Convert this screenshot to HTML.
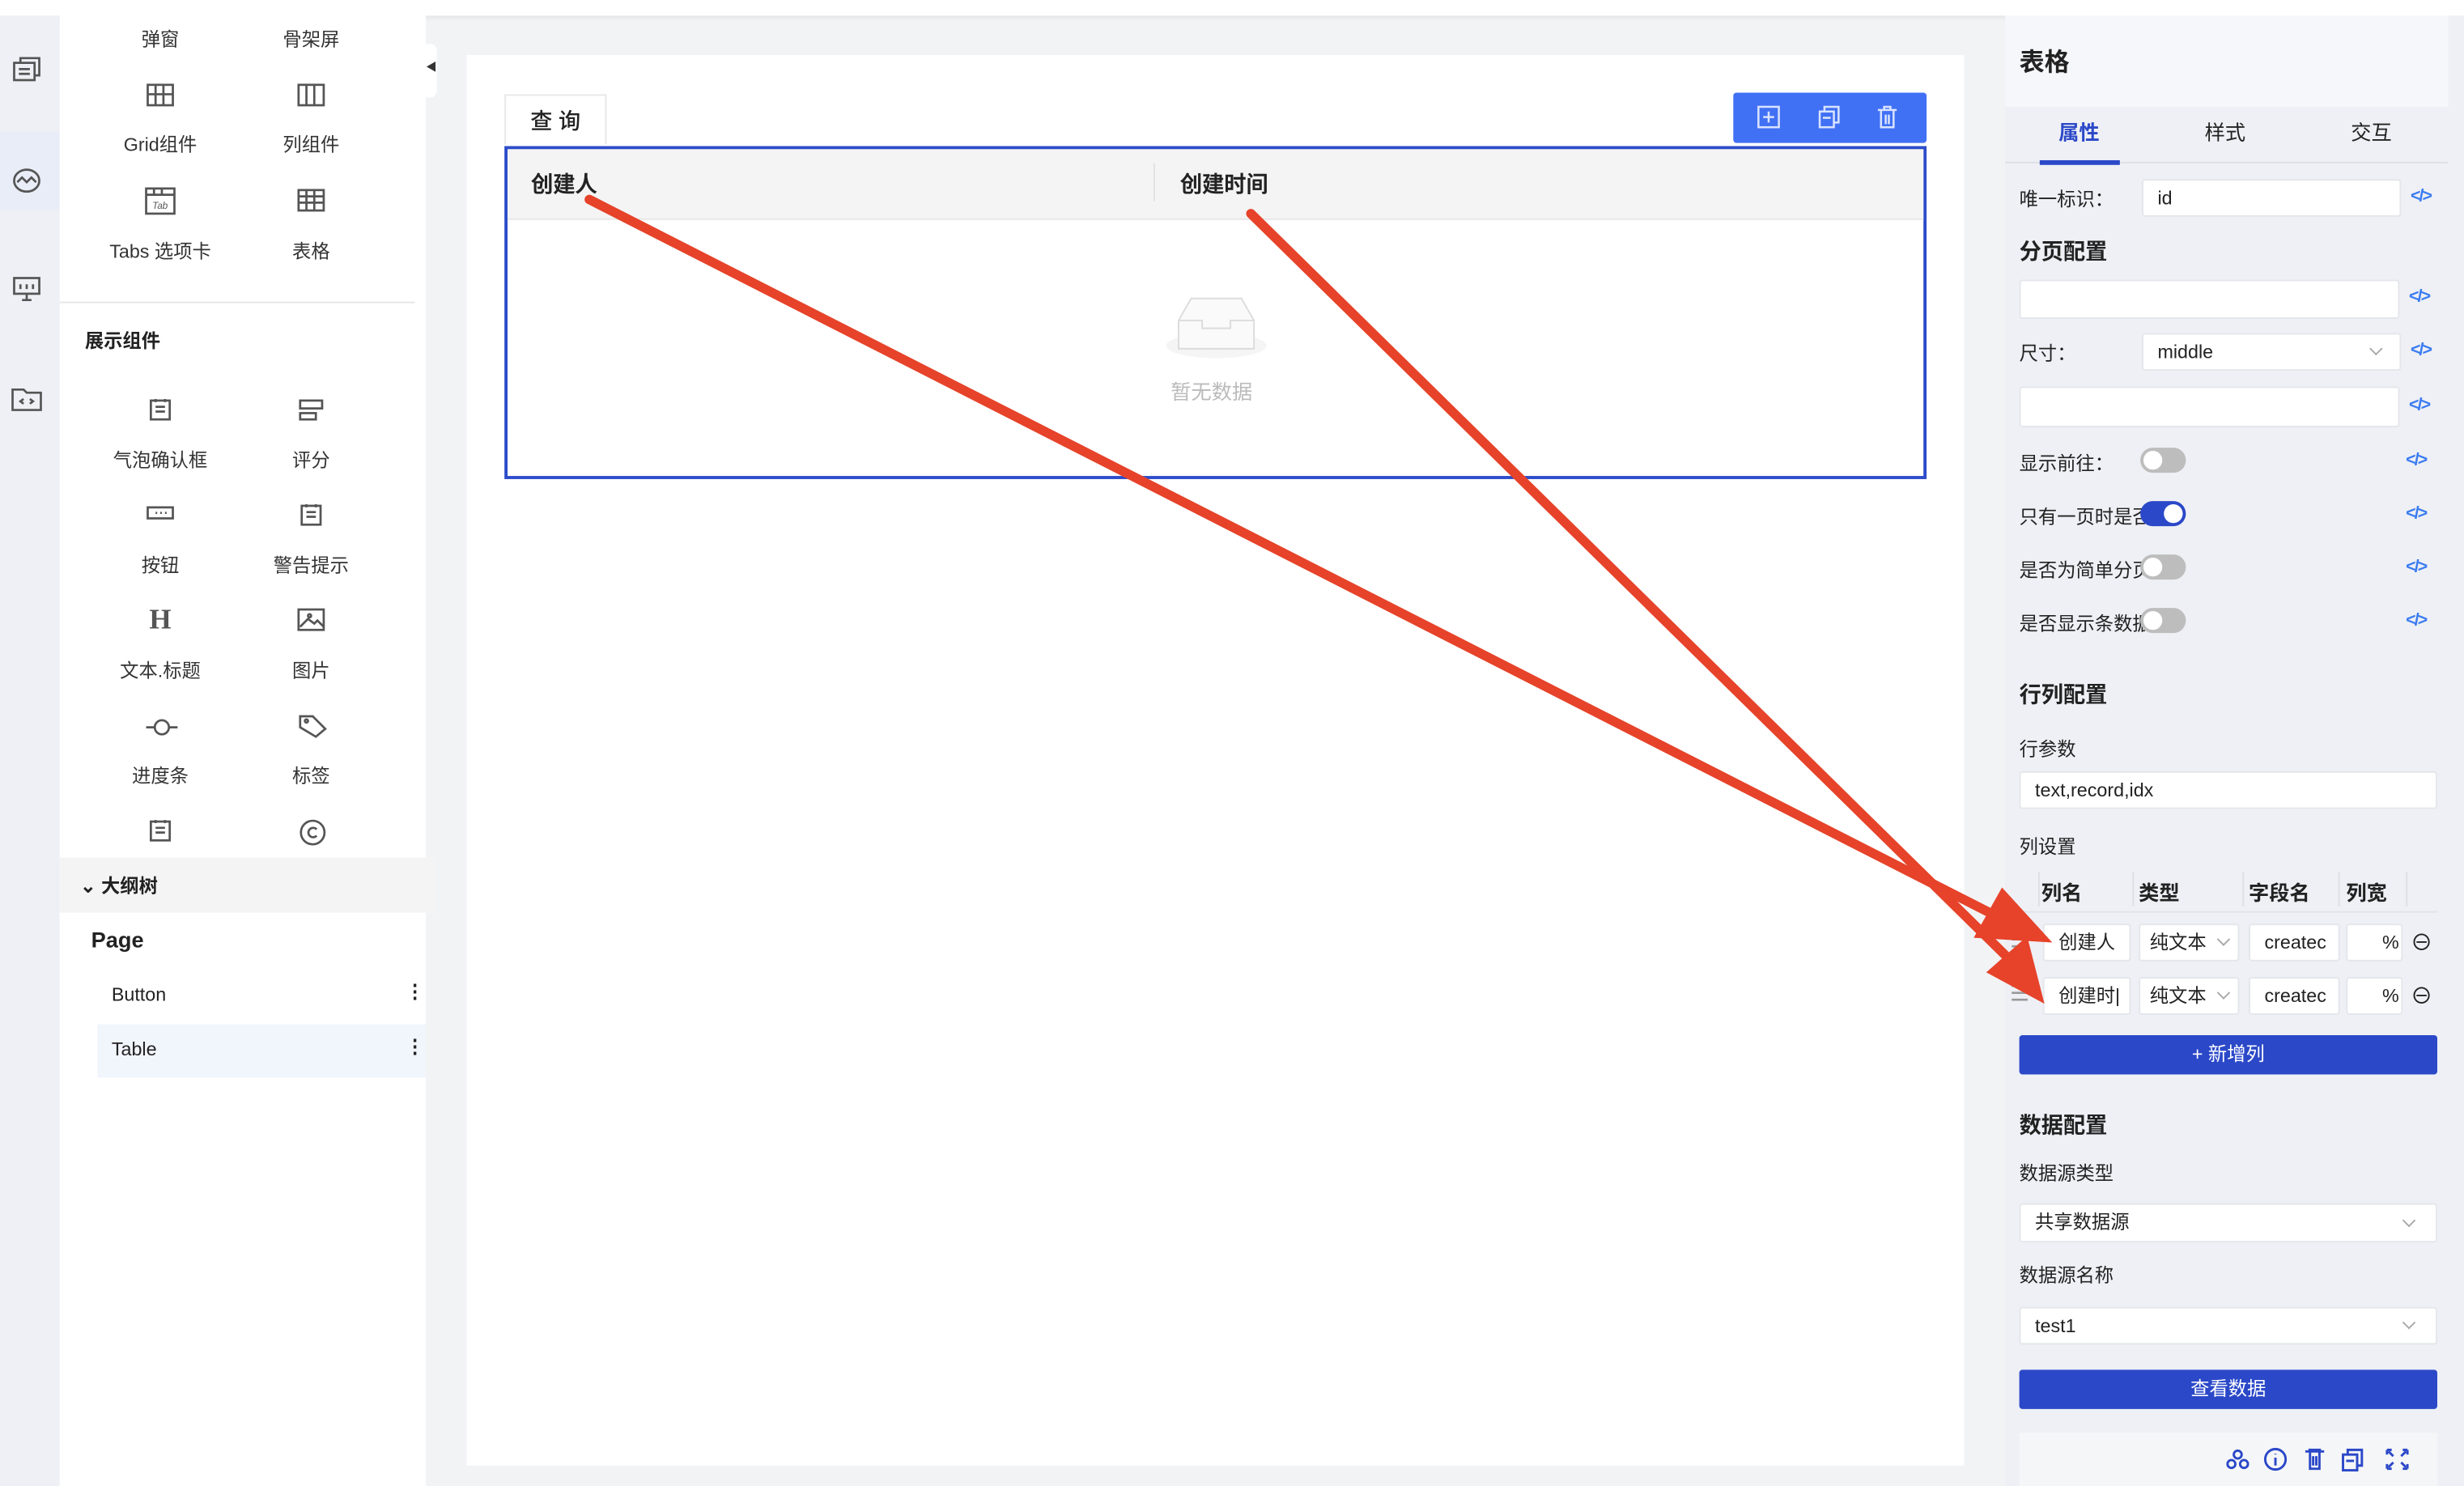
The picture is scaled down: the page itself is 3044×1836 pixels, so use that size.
<!DOCTYPE html>
<html><head><meta charset="utf-8">
<style>
*{box-sizing:border-box;margin:0;padding:0}
html,body{width:3044px;height:1836px;overflow:hidden;background:#f2f3f5}
#w{position:absolute;left:0;top:0;width:1568px;height:946px;transform:scale(1.94133,1.94080);transform-origin:0 0;font-family:"Liberation Sans","Noto Sans CJK SC",sans-serif;color:#222;font-size:12px;background:#f2f3f5}
.a{position:absolute}
.t{position:absolute;white-space:nowrap}
.ic{position:absolute;fill:none;stroke:#555;stroke-width:1.4}
.lab{position:absolute;width:96px;text-align:center;font-size:12px;color:#333}
.inp{position:absolute;background:#fff;border:1px solid #e4e6eb;border-radius:2px;font-size:12px;padding-left:9px;line-height:22px}
.code{position:absolute;color:#3a7bf0;font-size:11px;font-weight:bold;letter-spacing:-1px}
.tg{position:absolute;width:29px;height:16px;border-radius:8px;background:#bdbdbd}
.tg i{position:absolute;top:2px;left:2px;width:12px;height:12px;border-radius:50%;background:#fff}
.tg.on{background:#2b48c8}.tg.on i{left:15px}
.h{font-weight:bold;font-size:14px}
.chev{position:absolute;width:6px;height:6px;border-right:1px solid #aaa;border-bottom:1px solid #aaa;transform:rotate(45deg)}
.btn{position:absolute;background:#2b48c8;color:#fff;text-align:center;border-radius:2px;font-size:12px;line-height:24px}
</style></head><body><div id="w">
<div class="a" style="left:0;top:0;width:1568px;height:10px;background:#fff;box-shadow:0 1px 3px rgba(0,0,0,.08)"></div>
<div class="a" style="left:0;top:10px;width:38px;height:936px;background:#eef0f5"></div>
<div class="a" style="left:0;top:84px;width:38px;height:50px;background:#e9edf7"></div>
<div class="a" style="left:40px;top:102px;width:2px;height:24px;background:#3a62e0"></div>
<svg class="ic" style="left:7px;top:34px" width="20" height="20" viewBox="0 0 20 20"><rect x="2" y="6" width="13" height="11"/><path d="M6 6V3h12v11h-3M5 10h7M5 13h7"/></svg>
<svg class="ic" style="left:6px;top:104px" width="22" height="22" viewBox="0 0 22 22"><ellipse cx="11" cy="11" rx="8" ry="7"/><path d="M5 12l3-3 3 3 3-3 3 3"/></svg>
<svg class="ic" style="left:7px;top:174px" width="20" height="20" viewBox="0 0 20 20"><rect x="2" y="3" width="16" height="10"/><path d="M10 13v4M7 17h6M6 7v3M10 7v3M14 7v3"/></svg>
<svg class="ic" style="left:6px;top:244px" width="22" height="20" viewBox="0 0 22 20"><path d="M2 4h7l2 2h9v11H2z"/><path d="M9 10l-2 1.5 2 1.5M13 10l2 1.5-2 1.5"/></svg>
<div class="a" style="left:38px;top:10px;width:233px;height:536px;background:#fff"></div>
<div class="lab" style="left:54px;top:16px">弹窗</div><div class="lab" style="left:150px;top:16px">骨架屏</div>
<svg class="ic" style="left:92px;top:52px" width="20" height="18" viewBox="0 0 20 18"><rect x="2" y="2" width="16" height="13"/><path d="M7 2v13M12 2v13M2 8h16"/></svg>
<svg class="ic" style="left:188px;top:52px" width="20" height="18" viewBox="0 0 20 18"><rect x="2" y="2" width="16" height="13"/><path d="M7 2v13M12 2v13"/></svg>
<div class="lab" style="left:54px;top:83px">Grid组件</div><div class="lab" style="left:150px;top:83px">列组件</div>
<svg class="ic" style="left:91px;top:118px" width="22" height="20" viewBox="0 0 22 20"><rect x="2" y="2" width="18" height="16"/><path d="M2 6h18M7 2v4M12 2v4"/><text x="6" y="15" font-size="6" fill="#555" stroke="none" font-style="italic">Tab</text></svg>
<svg class="ic" style="left:188px;top:119px" width="20" height="18" viewBox="0 0 20 18"><rect x="2" y="2" width="16" height="13"/><path d="M2 6h16M2 10h16M7 2v13M12 2v13"/></svg>
<div class="lab" style="left:54px;top:151px">Tabs 选项卡</div><div class="lab" style="left:150px;top:151px">表格</div>
<div class="a" style="left:38px;top:192px;width:226px;height:1px;background:#e5e5e5"></div>
<div class="t" style="left:54px;top:208px;font-weight:bold;font-size:12px">展示组件</div>
<svg class="ic" style="left:94px;top:252px" width="16" height="18" viewBox="0 0 16 18"><rect x="2" y="3" width="12" height="12"/><path d="M5 2v2M11 2v2M5 7h6M5 10h6"/></svg>
<svg class="ic" style="left:189px;top:252px" width="18" height="18" viewBox="0 0 18 18"><rect x="2" y="3" width="14" height="5"/><rect x="2" y="11" width="10" height="4"/></svg>
<div class="lab" style="left:54px;top:284px">气泡确认框</div><div class="lab" style="left:150px;top:284px">评分</div>
<svg class="ic" style="left:92px;top:320px" width="20" height="14" viewBox="0 0 20 14"><rect x="2" y="3" width="16" height="7"/><path d="M7 6.5h1M10 6.5h1M13 6.5h1"/></svg>
<svg class="ic" style="left:190px;top:319px" width="16" height="18" viewBox="0 0 16 18"><rect x="2" y="3" width="12" height="12"/><path d="M5 2v2M11 2v2M5 7h6M5 10h6"/></svg>
<div class="lab" style="left:54px;top:351px">按钮</div><div class="lab" style="left:150px;top:351px">警告提示</div>
<div class="t" style="left:95px;top:384px;font-family:'Liberation Serif',serif;font-weight:bold;font-size:18px;color:#555">H</div>
<svg class="ic" style="left:188px;top:386px" width="20" height="18" viewBox="0 0 20 18"><rect x="2" y="2" width="16" height="13"/><path d="M3 13l5-5 4 3 2-2 4 4"/><circle cx="9" cy="6" r="1"/></svg>
<div class="lab" style="left:54px;top:418px">文本.标题</div><div class="lab" style="left:150px;top:418px">图片</div>
<svg class="ic" style="left:92px;top:456px" width="22" height="14" viewBox="0 0 22 14"><circle cx="11" cy="7" r="4.5"/><path d="M1 7h5M16 7h5"/></svg>
<svg class="ic" style="left:189px;top:453px" width="20" height="18" viewBox="0 0 20 18"><path d="M2 3h8l8 8-6 5-10-6z"/><circle cx="6" cy="6" r="1"/></svg>
<div class="lab" style="left:54px;top:485px">进度条</div><div class="lab" style="left:150px;top:485px">标签</div>
<svg class="ic" style="left:94px;top:520px" width="16" height="18" viewBox="0 0 16 18"><rect x="2" y="3" width="12" height="12"/><path d="M5 2v2M11 2v2M5 7h6M5 10h6"/></svg>
<svg class="ic" style="left:189px;top:520px" width="20" height="20" viewBox="0 0 20 20"><circle cx="10" cy="10" r="7.5"/><path d="M12.5 8a3 3 0 1 0 0 4"/></svg>
<div class="a" style="left:38px;top:546px;width:240px;height:35px;background:#f4f4f4"></div>
<div class="t" style="left:51px;top:555px;font-weight:bold;font-size:12px">⌄ 大纲树</div>
<div class="a" style="left:38px;top:581px;width:233px;height:365px;background:#fff"></div>
<div class="t" style="left:58px;top:590px;font-weight:bold;font-size:14px">Page</div>
<div class="t" style="left:71px;top:626px;font-size:12px">Button</div>
<div class="t" style="left:258px;top:624px;font-size:12px;font-weight:bold">⋮</div>
<div class="a" style="left:62px;top:652px;width:209px;height:34px;background:#f1f5fc"></div>
<div class="t" style="left:71px;top:661px;font-size:12px">Table</div>
<div class="t" style="left:258px;top:659px;font-size:12px;font-weight:bold">⋮</div>
<div class="a" style="left:271px;top:28px;width:7px;height:34px;background:#fff;border-radius:0 4px 4px 0"></div>
<div class="t" style="left:271px;top:38px;font-size:7px;color:#333">◀</div>
<div class="a" style="left:297px;top:35px;width:953px;height:898px;background:#fff"></div>
<div class="a" style="left:321px;top:60px;width:65px;height:32px;background:#fff;border:1px solid #e8e8e8;border-bottom:none;font-size:14px;line-height:32px;text-align:center;font-weight:500">查 询</div>
<div class="a" style="left:1103px;top:59px;width:123px;height:32px;background:#4070f4;border-radius:2px"></div>
<svg class="a" style="left:1117px;top:66px" width="100" height="18" viewBox="0 0 100 18" fill="none" stroke="#d9e3ff" stroke-width="1.3"><rect x="2" y="2" width="13" height="13"/><path d="M8.5 5v7M5 8.5h7"/><rect x="41" y="5" width="9" height="10"/><path d="M44 5V2h9v10h-3M43 9h5"/><path d="M78 4h12M82 4V2h4v2M80 4v11h8V4M83 7v6M85 7v6"/></svg>
<div class="a" style="left:321px;top:93px;width:905px;height:212px;border:2px solid #2c4cc9"></div>
<div class="a" style="left:323px;top:95px;width:901px;height:45px;background:#f4f4f4;border-bottom:1px solid #e8e8e8"></div>
<div class="a" style="left:734px;top:104px;width:1px;height:24px;background:#e2e2e2"></div>
<div class="t" style="left:338px;top:107px;font-size:14px;font-weight:500;-webkit-text-stroke:0.3px #222">创建人</div>
<div class="t" style="left:751px;top:107px;font-size:14px;font-weight:500;-webkit-text-stroke:0.3px #222">创建时间</div>
<svg class="a" style="left:740px;top:184px" width="68" height="46" viewBox="0 0 68 46"><ellipse cx="34" cy="36" rx="32" ry="8" fill="#f5f5f5"/><path d="M10 20l8-14h32l8 14v18H10z" fill="#fafafa" stroke="#dcdcdc"/><path d="M10 20h15v5h18v-5h15" fill="none" stroke="#dcdcdc"/></svg>
<div class="t" style="left:745px;top:239px;font-size:13px;color:#bbb">暂无数据</div>
<div class="a" style="left:1276px;top:10px;width:292px;height:936px;background:#eef0f5"></div>
<div class="a" style="left:1276px;top:10px;width:282px;height:58px;background:#f6f7fb"></div>
<div class="t" style="left:1285px;top:26px;font-size:16px;font-weight:bold">表格</div>
<div class="t" style="left:1310px;top:74px;font-size:13px;color:#2b48c8;font-weight:bold">属性</div>
<div class="t" style="left:1403px;top:74px;font-size:13px">样式</div>
<div class="t" style="left:1496px;top:74px;font-size:13px">交互</div>
<div class="a" style="left:1276px;top:103px;width:282px;height:1px;background:#dde0e6"></div>
<div class="a" style="left:1298px;top:102px;width:51px;height:3px;background:#2b48c8"></div>
<div class="t" style="left:1285px;top:118px">唯一标识：</div>
<div class="inp" style="left:1363px;top:114px;width:165px;height:24px">id</div>
<div class="code" style="left:1534px;top:119px">&lt;/&gt;</div>
<div class="t h" style="left:1285px;top:150px">分页配置</div>
<div class="inp" style="left:1285px;top:178px;width:242px;height:25px"></div>
<div class="code" style="left:1533px;top:183px">&lt;/&gt;</div>
<div class="t" style="left:1285px;top:216px">尺寸：</div>
<div class="inp" style="left:1363px;top:212px;width:165px;height:24px">middle</div>
<div class="chev" style="left:1509px;top:219px"></div>
<div class="code" style="left:1534px;top:217px">&lt;/&gt;</div>
<div class="inp" style="left:1285px;top:246px;width:242px;height:26px"></div>
<div class="code" style="left:1533px;top:252px">&lt;/&gt;</div>
<div class="t" style="left:1285px;top:286px">显示前往：</div><div class="tg" style="left:1362px;top:285px"><i></i></div><div class="code" style="left:1531px;top:287px">&lt;/&gt;</div>
<div class="t" style="left:1285px;top:320px;width:80px;overflow:hidden">只有一页时是否</div><div class="tg on" style="left:1362px;top:319px"><i></i></div><div class="code" style="left:1531px;top:321px">&lt;/&gt;</div>
<div class="t" style="left:1285px;top:354px;width:80px;overflow:hidden">是否为简单分页</div><div class="tg" style="left:1362px;top:353px"><i></i></div><div class="code" style="left:1531px;top:355px">&lt;/&gt;</div>
<div class="t" style="left:1285px;top:388px;width:80px;overflow:hidden">是否显示条数据</div><div class="tg" style="left:1362px;top:387px"><i></i></div><div class="code" style="left:1531px;top:389px">&lt;/&gt;</div>
<div class="t h" style="left:1285px;top:432px">行列配置</div>
<div class="t" style="left:1285px;top:468px">行参数</div>
<div class="inp" style="left:1285px;top:491px;width:266px;height:24px">text,record,idx</div>
<div class="t" style="left:1285px;top:530px">列设置</div>
<div class="a" style="left:1297px;top:555px;width:1px;height:22px;background:#dde0e6"></div>
<div class="a" style="left:1357px;top:555px;width:1px;height:22px;background:#dde0e6"></div>
<div class="a" style="left:1427px;top:555px;width:1px;height:22px;background:#dde0e6"></div>
<div class="a" style="left:1488px;top:555px;width:1px;height:22px;background:#dde0e6"></div>
<div class="a" style="left:1531px;top:555px;width:1px;height:22px;background:#dde0e6"></div>
<div class="a" style="left:1285px;top:580px;width:266px;height:1px;background:#e2e4e9"></div>
<div class="t h" style="left:1299px;top:558px;font-size:13px">列名</div>
<div class="t h" style="left:1361px;top:558px;font-size:13px">类型</div>
<div class="t h" style="left:1431px;top:558px;font-size:13px">字段名</div>
<div class="t h" style="left:1493px;top:558px;font-size:13px">列宽</div>
<div class="t" style="left:1279px;top:590px;color:#999;font-size:14px">☰</div>
<div class="inp" style="left:1300px;top:588px;width:56px;height:24px">创建人</div>
<div class="inp" style="left:1361px;top:588px;width:64px;height:24px;padding-left:6px">纯文本</div><div class="chev" style="left:1412px;top:595px"></div>
<div class="inp" style="left:1431px;top:588px;width:58px;height:24px;overflow:hidden;padding-right:4px">createc</div>
<div class="inp" style="left:1493px;top:588px;width:36px;height:24px;padding-left:22px">%</div>
<div class="t" style="left:1534px;top:590px;font-size:14px">⊖</div>
<div class="t" style="left:1279px;top:624px;color:#999;font-size:14px">☰</div>
<div class="inp" style="left:1300px;top:622px;width:56px;height:24px;overflow:hidden">创建时|</div>
<div class="inp" style="left:1361px;top:622px;width:64px;height:24px;padding-left:6px">纯文本</div><div class="chev" style="left:1412px;top:629px"></div>
<div class="inp" style="left:1431px;top:622px;width:58px;height:24px;overflow:hidden">createc</div>
<div class="inp" style="left:1493px;top:622px;width:36px;height:24px;padding-left:22px">%</div>
<div class="t" style="left:1534px;top:624px;font-size:14px">⊖</div>
<div class="btn" style="left:1285px;top:659px;width:266px;height:25px">+ 新增列</div>
<div class="t h" style="left:1285px;top:706px">数据配置</div>
<div class="t" style="left:1285px;top:738px">数据源类型</div>
<div class="inp" style="left:1285px;top:766px;width:266px;height:25px;line-height:23px">共享数据源</div><div class="chev" style="left:1530px;top:774px"></div>
<div class="t" style="left:1285px;top:803px">数据源名称</div>
<div class="inp" style="left:1285px;top:832px;width:266px;height:24px">test1</div><div class="chev" style="left:1530px;top:839px"></div>
<div class="btn" style="left:1285px;top:872px;width:266px;height:25px">查看数据</div>
<div class="a" style="left:1285px;top:912px;width:266px;height:34px;background:#f5f6f8"></div>
<svg class="a" style="left:1414px;top:920px" width="125" height="18" viewBox="0 0 125 18" fill="none" stroke="#2b48c8" stroke-width="1.5"><circle cx="10" cy="6" r="2.5"/><circle cx="6" cy="12" r="2.5"/><circle cx="14" cy="12" r="2.5"/><circle cx="34" cy="9" r="6.5"/><path d="M34 8v5M34 5.5v.5"/><path d="M53 4h12M56 4v11h6V4M58 7v6M60 7v6M55 3h8"/><rect x="77" y="6" width="9" height="10"/><path d="M80 6V3h9v10h-3M79 10h5"/><path d="M105 3h3M105 3v3M118 3h-3M118 3v3M105 15h3M105 15v-3M118 15h-3M118 15v-3M106 4l3 3M117 4l-3 3M106 14l3-3M117 14l-3-3"/></svg>
<svg class="a" style="left:0;top:0" width="1568" height="946" viewBox="0 0 1568 946">
<g stroke="#e6432a" stroke-width="6" stroke-linecap="round" fill="none"><path d="M375 127L1270 583"/><path d="M796 136L1276 608"/></g>
<g fill="#e6432a"><path d="M1306 600L1256 597L1274 565Z"/><path d="M1301 639L1264 619L1290 596Z"/></g>
</svg>
</div></body></html>
